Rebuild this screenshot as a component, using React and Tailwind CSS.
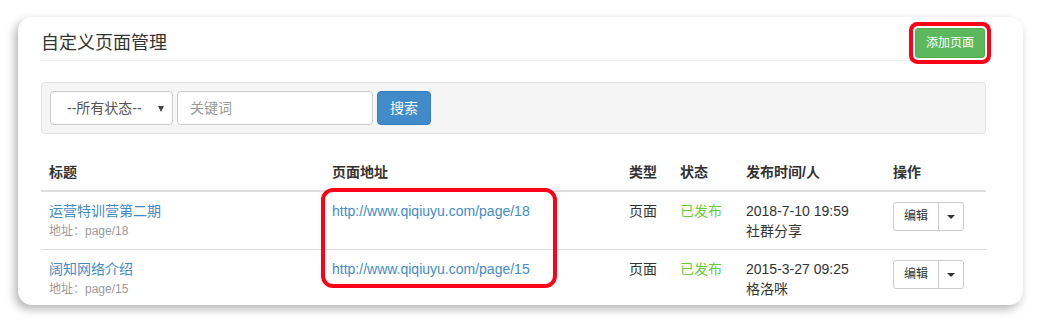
import React from 'react';

const rows = [
  {
    title: '运营特训营第二期',
    path: 'page/18',
    url: 'http://www.qiqiuyu.com/page/18',
    type: '页面',
    status: '已发布',
    time: '2018-7-10 19:59',
    user: '社群分享',
  },
  {
    title: '阔知网络介绍',
    path: 'page/15',
    url: 'http://www.qiqiuyu.com/page/15',
    type: '页面',
    status: '已发布',
    time: '2015-3-27 09:25',
    user: '格洛咪',
  },
];

function EditGroup() {
  return (
    <div className="inline-flex h-[29px] rounded-[3px] border border-[#ccc] bg-white">
      <button className="px-[10px] text-[12px] leading-[27px] text-[#333] border-r border-[#ccc]">编辑</button>
      <button className="w-[24px] flex items-center justify-center">
        <svg width="8" height="4" viewBox="0 0 8 4">
          <path d="M0 0h8L4 4z" fill="#333" />
        </svg>
      </button>
    </div>
  );
}

export default function App() {
  return (
    <div
      className="w-[1041px] h-[324px] bg-white pt-[17px] pl-[18px]"
      style={{ fontFamily: '"Liberation Sans", "Noto Sans CJK SC", sans-serif' }}
    >
      <div className="relative w-[1005px] h-[288px] bg-white rounded-[14px] overflow-hidden shadow-[-3px_4px_10px_rgba(0,0,0,0.3)] pl-[23px] pr-[37px]">
        {/* header */}
        <div className="h-[44px] pt-[8px] flex items-center justify-between border-b border-[#eee]">
          <h1 className="text-[18px] text-[#333] leading-none">自定义页面管理</h1>
          <button className="mr-[1px] h-[30px] px-[10px] rounded-[3px] bg-[#5cb85c] border border-[#4cae4c] text-white text-[12px] shadow-[0_0_0_2px_#fff,0_0_0_6px_#fe0017]">
            添加页面
          </button>
        </div>

        {/* filter bar */}
        <div className="mt-[21px] rounded-[4px] border border-[#e3e3e3] bg-[#f5f5f5] p-[8px] flex items-center gap-[4px]">
          <div className="relative w-[123px] h-[34px] rounded-[4px] border border-[#ccc] bg-white flex items-center pl-[16px] text-[14px] text-[#555]">
            --所有状态--
            <svg className="absolute right-[8px] top-[14px]" width="6" height="6" viewBox="0 0 6 6">
              <path d="M0 0h6L3 6z" fill="#444" />
            </svg>
          </div>
          <div className="w-[196px] h-[34px] rounded-[4px] border border-[#ccc] bg-white flex items-center pl-[12px] text-[14px] text-[#999]">
            关键词
          </div>
          <button className="w-[54px] h-[34px] rounded-[4px] bg-[#428bca] border border-[#357ebd] text-white text-[14px]">
            搜索
          </button>
        </div>

        {/* table */}
        <table className="mt-[20px] w-full table-fixed border-collapse text-[14px] text-[#333]">
          <colgroup>
            <col className="w-[283px]" />
            <col className="w-[297px]" />
            <col className="w-[51px]" />
            <col className="w-[66px]" />
            <col className="w-[147px]" />
            <col className="w-[101px]" />
          </colgroup>
          <thead>
            <tr className="border-b-2 border-[#ddd]">
              {['标题', '页面地址', '类型', '状态', '发布时间/人', '操作'].map((h) => (
                <th key={h} className="p-[8px] text-left font-bold leading-[20px]">{h}</th>
              ))}
            </tr>
          </thead>
          <tbody>
            {rows.map((r, i) => (
              <tr key={r.path} className={i > 0 ? 'border-t border-[#ddd]' : ''}>
                <td className="px-[8px] pt-[9px] pb-[7px] align-top leading-[20px]">
                  <div className="text-[#428bca]">{r.title}</div>
                  <div className="text-[12px] text-[#999] leading-[21px]">地址：{r.path}</div>
                </td>
                <td className="px-[8px] pt-[9px] pb-[7px] align-top leading-[20px] text-[#428bca]">{r.url}</td>
                <td className="px-[8px] pt-[9px] pb-[7px] align-top leading-[20px]">{r.type}</td>
                <td className="px-[8px] pt-[9px] pb-[7px] align-top leading-[20px] text-[#6acc3c]">{r.status}</td>
                <td className="px-[8px] pt-[9px] pb-[7px] align-top leading-[20px]">
                  <div>{r.time}</div>
                  <div>{r.user}</div>
                </td>
                <td className="px-[8px] pt-[10px] align-top">
                  <EditGroup />
                </td>
              </tr>
            ))}
          </tbody>
        </table>

        {/* annotation around the URLs */}
        <div className="absolute left-[303px] top-[171px] w-[236px] h-[100px] rounded-[12px] border-4 border-[#fe0017] pointer-events-none" />
      </div>
    </div>
  );
}
